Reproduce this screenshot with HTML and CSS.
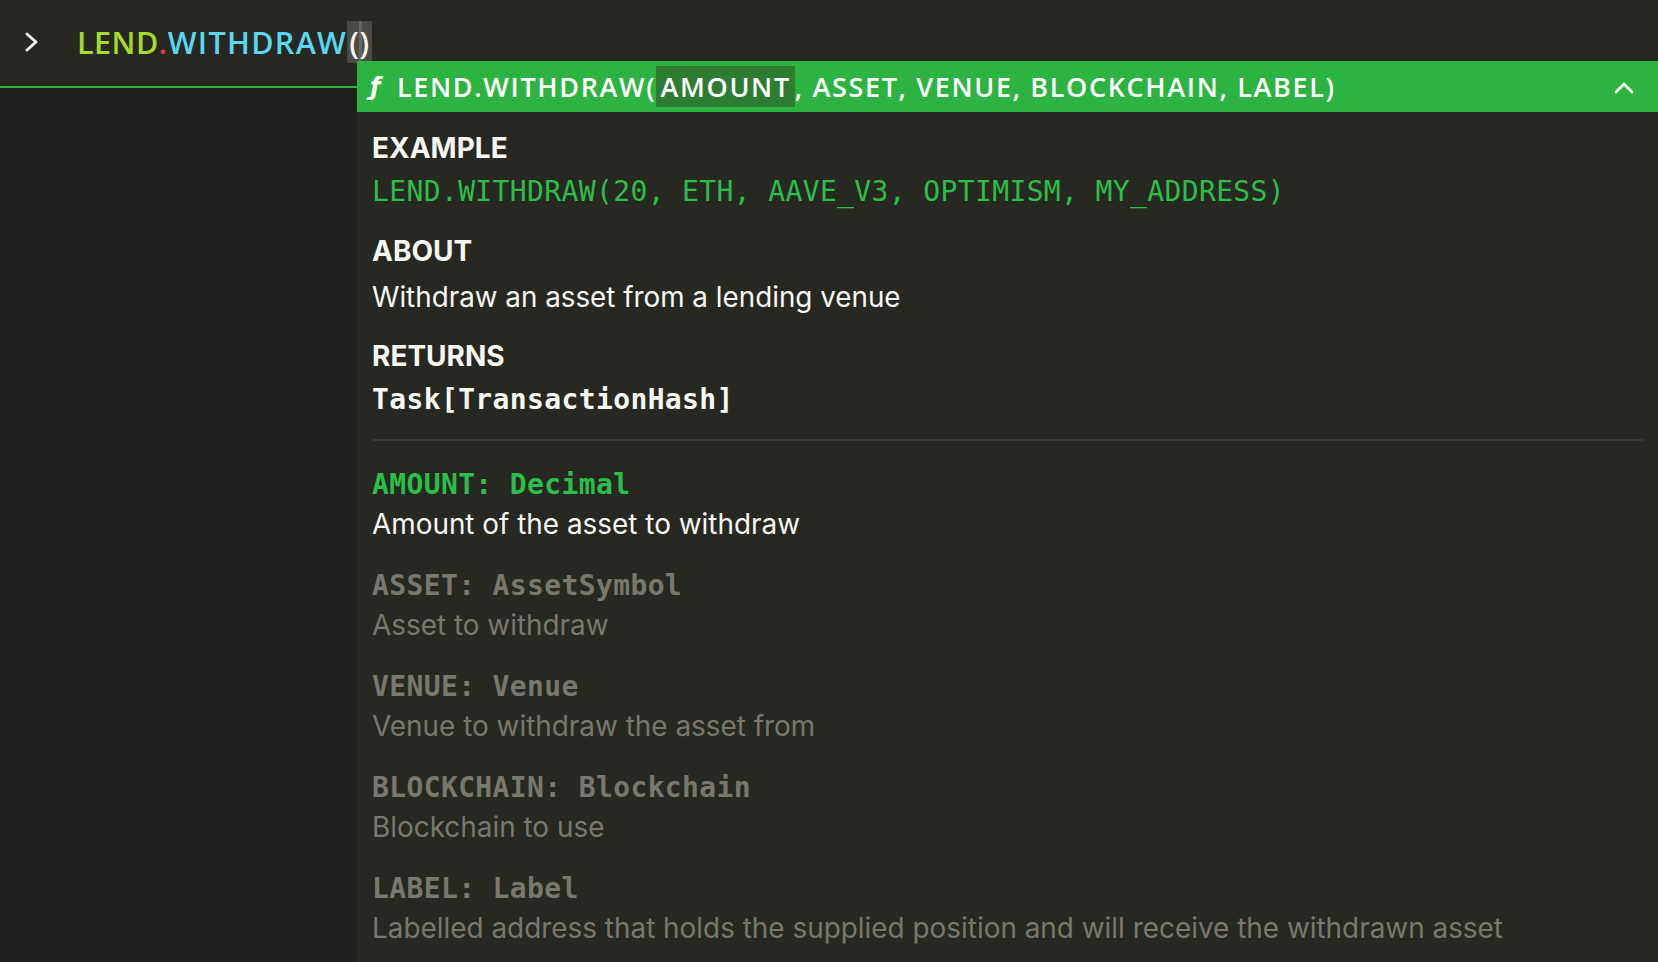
FILE: index.html
```html
<!DOCTYPE html>
<html lang="en">
<head>
<meta charset="utf-8">
<title>LEND.WITHDRAW</title>
<link rel="stylesheet" href="styles.css">
</head>
<body>
<div class="app">
  <div class="input-row">
    <svg class="prompt" width="16" height="22" viewBox="0 0 16 22"><polyline points="3,3 12,11 3,19" fill="none" stroke="#f4f4f0" stroke-width="3" stroke-linecap="round" stroke-linejoin="round"/></svg>
    <div class="input-text"><span class="ns">LEND</span><span class="dot">.</span><span class="fn">WITHDRAW</span><span class="paren">()</span></div>
  </div>
  <div class="below"></div>

  <div class="popup">
    <div class="sig">
      <span class="f-icon">ƒ</span>
      <span class="sig-text">LEND.WITHDRAW(<span class="active">AMOUNT</span>, ASSET, VENUE, BLOCKCHAIN, LABEL)</span>
      <svg class="collapse" width="20" height="14" viewBox="0 0 20 14"><polyline points="2,12 10,4 18,12" fill="none" stroke="#ffffff" stroke-width="2.6" stroke-linecap="round" stroke-linejoin="round"/></svg>
    </div>
    <div class="doc">
      <div class="section">
        <div class="heading">EXAMPLE</div>
        <div class="code green">LEND.WITHDRAW(20, ETH, AAVE_V3, OPTIMISM, MY_ADDRESS)</div>
      </div>
      <div class="section">
        <div class="heading">ABOUT</div>
        <div class="text">Withdraw an asset from a lending venue</div>
      </div>
      <div class="section">
        <div class="heading">RETURNS</div>
        <div class="code">Task[TransactionHash]</div>
      </div>
      <div class="rule"></div>
      <div class="params">
        <div class="param current">
          <div class="param-name">AMOUNT: Decimal</div>
          <div class="param-desc">Amount of the asset to withdraw</div>
        </div>
        <div class="param">
          <div class="param-name">ASSET: AssetSymbol</div>
          <div class="param-desc">Asset to withdraw</div>
        </div>
        <div class="param">
          <div class="param-name">VENUE: Venue</div>
          <div class="param-desc">Venue to withdraw the asset from</div>
        </div>
        <div class="param">
          <div class="param-name">BLOCKCHAIN: Blockchain</div>
          <div class="param-desc">Blockchain to use</div>
        </div>
        <div class="param">
          <div class="param-name">LABEL: Label</div>
          <div class="param-desc">Labelled address that holds the supplied position and will receive the withdrawn asset</div>
        </div>
      </div>
    </div>
  </div>
</div>
</body>
</html>
```

FILE: styles.css
```css
html, body {
  margin: 0;
  padding: 0;
  height: 100%;
  background: #1f1f1d;
  overflow: hidden;
}

.app {
  position: relative;
  width: 1658px;
  height: 962px;
  display: flex;
  flex-direction: column;
}

.input-row {
  height: 83px;
  padding-bottom: 3px;
  background: #282823;
  border-bottom: 2px solid #2db341;
  display: flex;
  align-items: center;
}

.prompt {
  margin-left: 24px;
  flex: none;
}

.input-text {
  margin-left: 37px;
  font-family: "Open Sans", sans-serif;
  font-size: 30.5px;
  font-weight: 600;
  letter-spacing: 0.5px;
  color: #f4f4f0;
}

.ns { color: #a8da2a; }
.dot { color: #e2413b; }
.fn {
  color: #5bd6ee;
  letter-spacing: 1.3px;
}
.paren {
  color: #f4f4f0;
  background: linear-gradient(to right, #4b4b46 0, #4b4b46 12px, #66665f 12px, #66665f 15px, #4b4b46 15px);
  padding: 0 2px 0 2px;
}

.below {
  flex: 1;
  background: #1f1f1d;
}

.popup {
  position: absolute;
  left: 357px;
  top: 61px;
  right: 0;
  bottom: 0;
  background: #282823;
  display: flex;
  flex-direction: column;
}

.sig {
  height: 51px;
  flex: none;
  background: #2db341;
  display: flex;
  align-items: center;
  padding: 0 24px 0 13px;
  color: #ffffff;
  font-family: "Open Sans", sans-serif;
  font-size: 27px;
  font-weight: 600;
}

.f-icon {
  font-family: "DejaVu Sans", sans-serif;
  font-style: italic;
  font-weight: 700;
  font-size: 24px;
  width: 27px;
}

.sig-text {
  flex: 1;
  white-space: nowrap;
  letter-spacing: 1.65px;
}

.active {
  background: #2e7b32;
  padding: 2px 4px 2px 4px;
}

.collapse {
  flex: none;
}

.doc {
  padding: 16px 15px 0 15px;
  font-family: "Inter", sans-serif;
  color: #f7f7f3;
}

.section {
  margin-bottom: 19px;
}

.heading {
  font-size: 28px;
  font-weight: 700;
  line-height: 40px;
}

.code {
  margin-top: 4px;
  font-family: "DejaVu Sans Mono", monospace;
  font-weight: 700;
  font-size: 28px;
  letter-spacing: 0.37px;
  line-height: 40px;
}

.green {
  color: #2cbf48;
  font-weight: 400;
}

.text {
  margin-top: 6px;
  font-size: 27.8px;
  line-height: 40px;
}

.rule {
  height: 2px;
  background: #3a3a35;
}

.params {
  padding-top: 25px;
  display: flex;
  flex-direction: column;
  gap: 23px;
}

.param {
  color: #78786f;
}

.param-name {
  font-family: "DejaVu Sans Mono", monospace;
  font-weight: 700;
  font-size: 28px;
  letter-spacing: 0.37px;
  line-height: 38px;
}

.param-desc {
  font-size: 27.9px;
  line-height: 40px;
  white-space: nowrap;
}

.param.current .param-name { color: #2cbf48; }
.param.current .param-desc { color: #f7f7f3; }
```
